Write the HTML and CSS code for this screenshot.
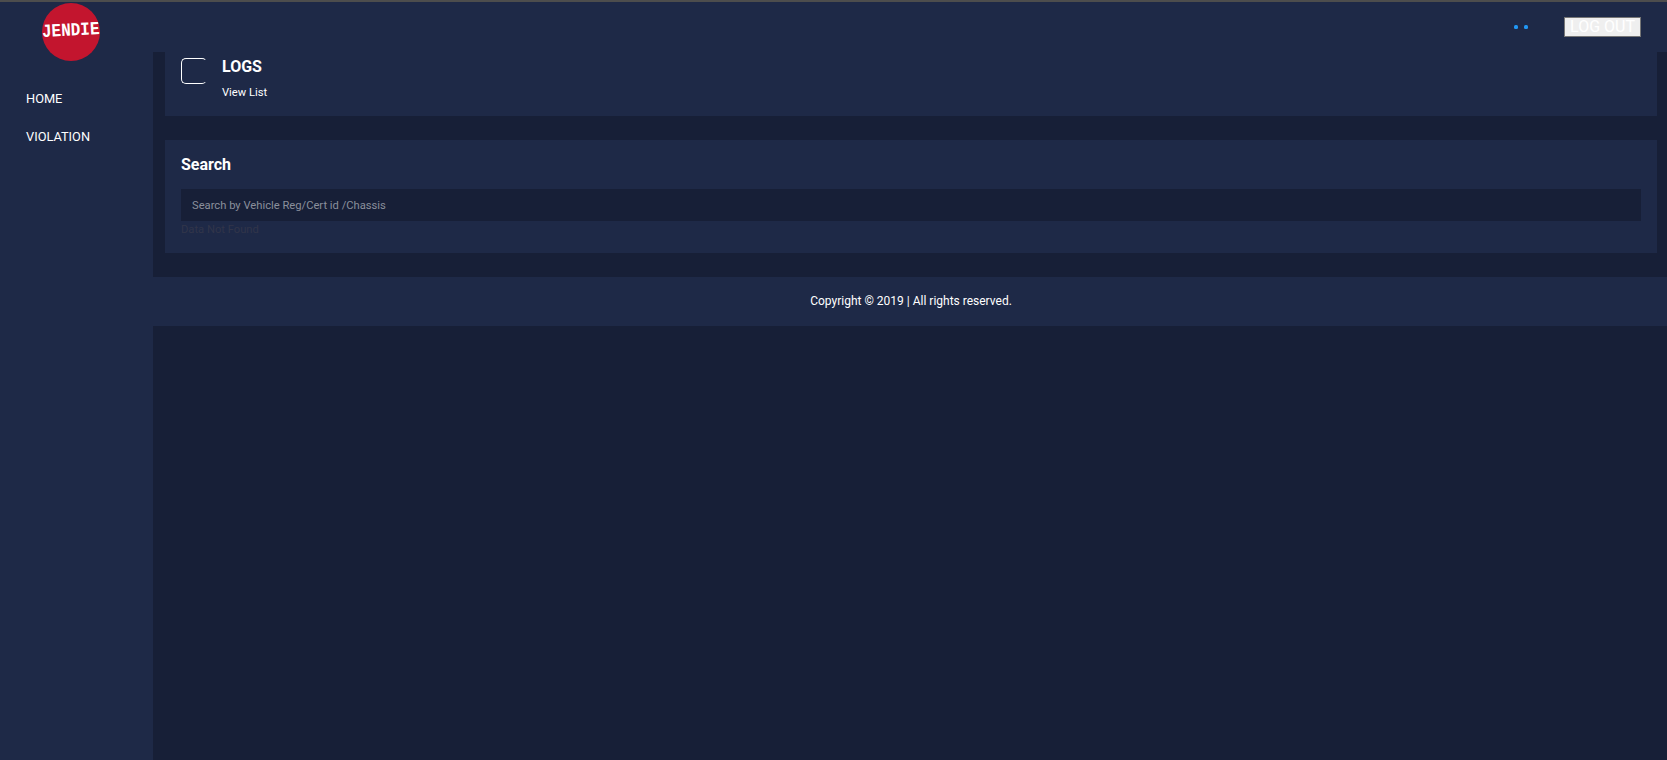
FILE: index.html
```html
<!DOCTYPE html>
<html lang="en">
<head>
<meta charset="utf-8">
<title>Jendie</title>
<link rel="stylesheet" href="styles.css">
</head>
<body>
<header class="topbar">
  <div class="logo"><span class="logo-text">JENDIE</span></div>
  <div class="top-actions">
    <div class="dots"><span class="dot"></span><span class="dot"></span></div>
    <button class="logout" type="button">LOG OUT</button>
  </div>
</header>
<div class="shell">
  <nav class="sidebar">
    <a class="nav-link">HOME</a>
    <a class="nav-link">VIOLATION</a>
  </nav>
  <main class="main">
    <div class="content">
      <section class="card logs">
        <div class="icon-box"></div>
        <div class="logs-text">
          <h2 class="logs-title">LOGS</h2>
          <a class="logs-link">View List</a>
        </div>
      </section>
      <section class="card search">
        <h2 class="search-title">Search</h2>
        <input class="search-input" type="text" placeholder="Search by Vehicle Reg/Cert id /Chassis">
        <p class="empty">Data Not Found</p>
      </section>
    </div>
    <footer class="footer">Copyright © 2019 | All rights reserved.</footer>
  </main>
</div>
</body>
</html>
```
FILE: styles.css
```css
* { box-sizing: border-box; }
html, body { height: 100%; }
body {
  margin: 0;
  height: 760px;
  overflow: hidden;
  background: #171f37;
  color: #fff;
  font-family: Roboto, "Liberation Sans", sans-serif;
  display: flex;
  flex-direction: column;
}
.topbar {
  height: 52px;
  flex: none;
  background: #1e2947;
  border-top: 2px solid #4d4d4d;
  display: flex;
  justify-content: space-between;
  align-items: flex-start;
  position: relative;
  z-index: 1;
}
.logo {
  width: 58px;
  height: 58px;
  margin: 1px 0 0 42px;
  border-radius: 50%;
  background: #c3152e;
  display: flex;
  align-items: center;
  justify-content: center;
  overflow: hidden;
}
.logo-text {
  font-family: "Liberation Mono", monospace;
  font-weight: 700;
  font-size: 16px;
  letter-spacing: 0;
  color: #fff;
  transform: rotate(-3deg) scaleY(1.15) translateY(-1px);
}
.top-actions {
  display: flex;
  align-items: center;
  margin: 15px 26px 0 0;
}
.dots { display: flex; gap: 6px; margin-right: 36px; }
.dot { width: 4px; height: 4px; border-radius: 1.5px; background: #2196f3; }
.logout {
  width: 77px;
  height: 20px;
  padding: 0;
  background: #efefef;
  border: 1px solid #767676;
  color: #fff;
  font-family: Roboto, sans-serif;
  font-size: 16px;
  line-height: 18px;
}
.shell { flex: 1; display: flex; min-height: 0; }
.sidebar {
  width: 153px;
  flex: none;
  background: #1e2947;
  padding: 39px 0 0 26px;
  display: flex;
  flex-direction: column;
  gap: 23px;
}
.nav-link { font-size: 12.8px; line-height: 15px; color: #fff; font-weight: 400; }
.main { flex: 1; min-width: 0; }
.content { padding: 0 10px 24px 12px; display: flex; flex-direction: column; gap: 24px; }
.card { background: #1e2947; }
.logs { height: 64px; padding: 5px 16px 0; display: flex; gap: 15px; }
.icon-box {
  width: 26px;
  height: 26px;
  margin-top: 1px;
  border: 1px solid #fff;
  border-right-color: transparent;
  border-radius: 5px;
}
.logs-title { margin: 0; font-size: 16px; line-height: 19px; font-weight: 700; }
.logs-link { display: block; margin-top: 10px; font-size: 11.2px; line-height: 13px; font-weight: 400; color: #fff; }
.search { height: 113px; padding: 15px 16px 0; }
.search-title { margin: 0; font-size: 16px; line-height: 19px; font-weight: 700; }
.search-input {
  display: block;
  width: 100%;
  height: 32px;
  margin-top: 15px;
  padding: 0 11px;
  border: 0;
  outline: 0;
  background: #171f37;
  color: #fff;
  font-family: Roboto, sans-serif;
  font-size: 11.2px;
}
.search-input::placeholder { color: #8a8f9c; opacity: 1; }
.empty { margin: 2px 0 0; font-size: 11.2px; line-height: 14px; color: #31354a; }
.footer {
  height: 49px;
  background: #1e2947;
  display: flex;
  align-items: center;
  justify-content: center;
  font-size: 12px;
  color: #fff;
  padding: 0 0 2px 2px;
}
```
